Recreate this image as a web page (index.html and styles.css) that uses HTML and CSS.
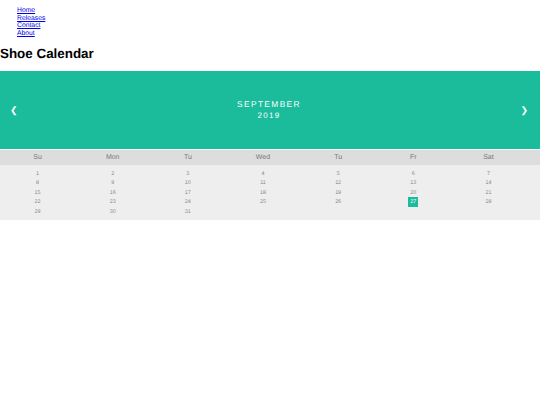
FILE: index.html
```html
<!DOCTYPE html>
<html>
<head>
	<title>Shoe Calendar</title>
	<link rel="stylesheet" href="styles.css">
</head>
<body>
	<ul class="nav">
		<li><a href="#">Home</a></li>
		<li><a href="#">Releases</a></li>
		<li><a href="#">Contact</a></li>
		<li><a href="#">About</a></li>
	</ul>
	<h1>Shoe Calendar</h1>
	<div class="month">
		<span class="arrow">&#10094;</span>
		<div class="month-name">SEPTEMBER<span class="year">2019</span></div>
		<span class="arrow">&#10095;</span>
	</div>
	<ul class="weekdays">
		<li>Su</li>
		<li>Mon</li>
		<li>Tu</li>
		<li>Wed</li>
		<li>Tu</li>
		<li>Fr</li>
		<li>Sat</li>
	</ul>
	<ul class="days">
		<li>1</li><li>2</li><li>3</li><li>4</li><li>5</li><li>6</li><li>7</li>
		<li>8</li><li>9</li><li>10</li><li>11</li><li>12</li><li>13</li><li>14</li>
		<li>15</li><li>16</li><li>17</li><li>18</li><li>19</li><li>20</li><li>21</li>
		<li>22</li><li>23</li><li>24</li><li>25</li><li>26</li><li><span class="active">27</span></li><li>28</li>
		<li>29</li><li>30</li><li>31</li>
	</ul>
</body>
</html>
```

FILE: styles.css
```css
body {
	margin: 0;
	font-family: 'Liberation Sans', Arial, sans-serif;
	text-rendering: geometricPrecision;
}

ul {
	margin: 0;
	padding: 0;
	list-style: none;
}

.nav {
	padding: 7px 0 0 17px;
	font-size: 6.8px;
	line-height: 7.5px;
}

.nav a {
	color: #0000ee;
}

h1 {
	margin: 8px 0 9px;
	font-size: 13.4px;
	line-height: 17px;
	color: #000;
}

.month {
	display: flex;
	justify-content: space-between;
	align-items: center;
	height: 78px;
	padding: 0 12px 0 10px;
	background-color: #1abc9c;
	color: white;
}

.arrow {
	font-size: 9px;
}

.month-name {
	font-size: 8.4px;
	line-height: 11px;
	letter-spacing: 1.35px;
	text-align: center;
	font-weight: normal;
}

.year {
	display: block;
	font-size: 8px;
}

.weekdays,
.days {
	display: grid;
	grid-template-columns: repeat(7, 1fr);
	padding-right: 14px;
	text-align: center;
}

.weekdays {
	margin-top: 1px;
	height: 15px;
	line-height: 15px;
	background-color: #ddd;
	color: #777;
	font-size: 7px;
}

.days {
	height: 47px;
	padding-top: 5px;
	padding-bottom: 3px;
	grid-auto-rows: 9.4px;
	line-height: 9.4px;
	background-color: #eee;
	color: #888;
	font-size: 5.4px;
}

.active {
	display: inline-block;
	vertical-align: top;
	width: 10px;
	height: 10px;
	margin-top: -1px;
	line-height: 10px;
	background-color: #1abc9c;
	color: white;
}
```
